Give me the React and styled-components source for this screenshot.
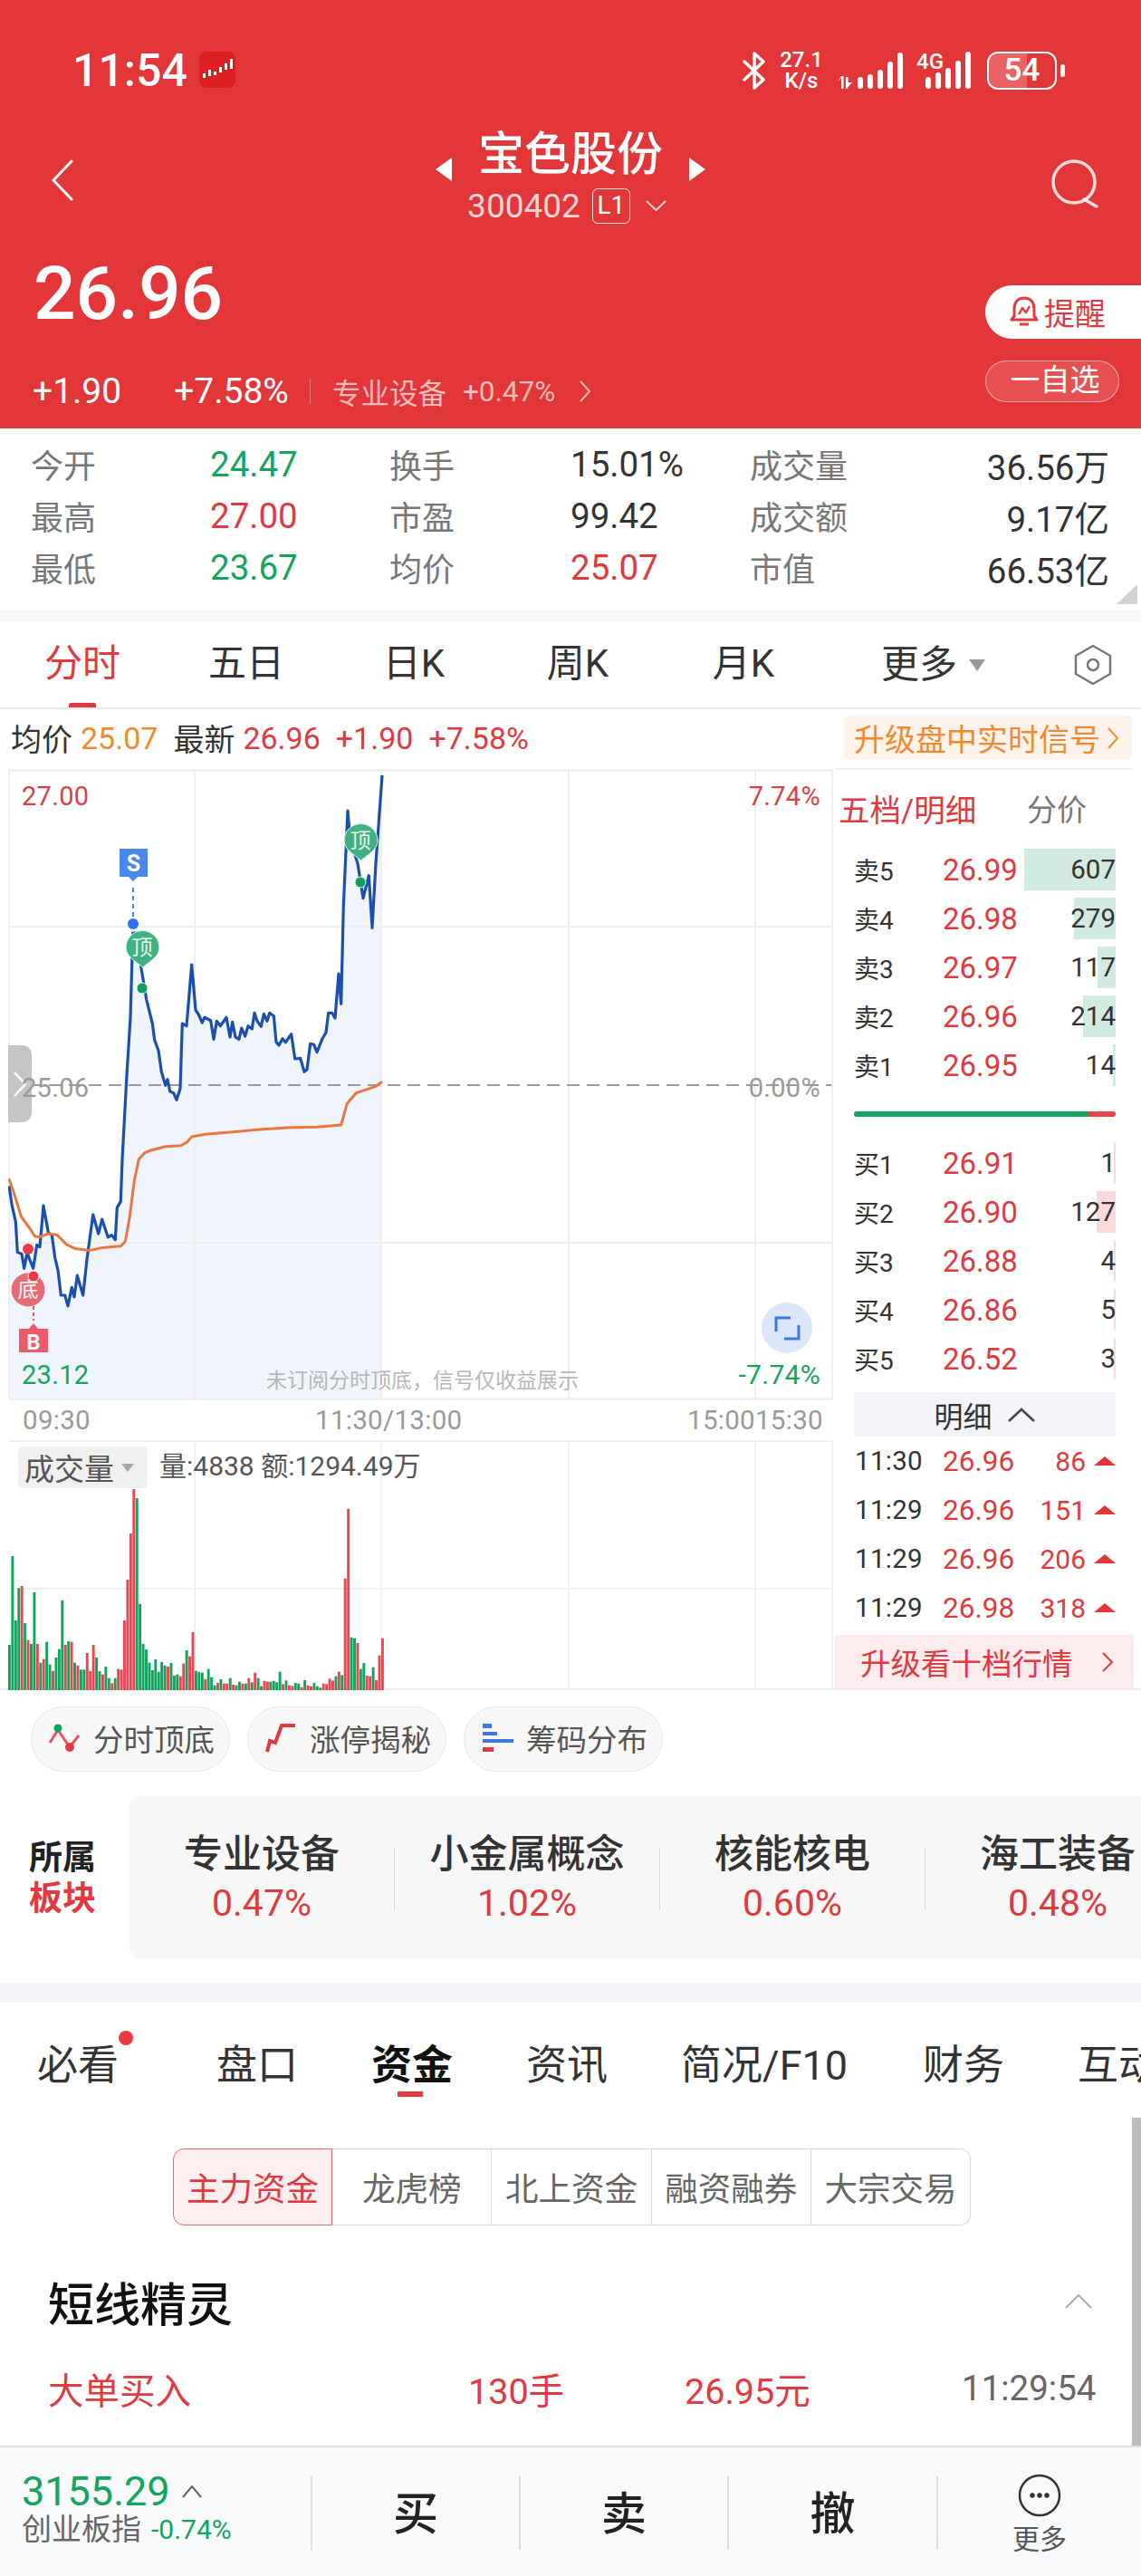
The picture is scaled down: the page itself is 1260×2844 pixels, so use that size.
import { Fragment } from 'react';
import styled, { createGlobalStyle } from 'styled-components';

const RED = '#e0393f';
const GREEN = '#11a561';

const GlobalStyle = createGlobalStyle`
  * { box-sizing: border-box; }
  html, body { margin: 0; padding: 0; background: #fff; }
  body { font-family: Roboto, "Noto Sans CJK SC", sans-serif; color: #333; }
`;

// chart points are read off the reference, page coordinates
const z3 = ([x, y]) => [x / 3, 840 + y / 3];
const z4 = ([x, y]) => [x / 3, 1260 + y / 2.53];

const priceLow = [[30,125],[40,180],[52,225],[58,310],[65,312],[72,315],[80,355],[90,310],[98,330],[110,355],[122,290],[132,295],[144,180],[160,255],[172,262],[182,325],[192,360],[202,430],[215,430],[225,460],[238,408],[246,435],[256,375],[275,430],[288,330],[308,205],[326,258],[338,218],[358,268],[370,262],[382,275],[388,185],[400,168]].map(z4);
const priceHigh = [[405,1320],[420,1040],[432,850],[440,570],[450,570],[470,700],[485,790],[505,870],[512,925],[525,960],[535,1030],[548,1075],[555,1055],[563,1095],[575,1100],[585,1123],[597,1085],[604,870],[618,878],[635,675],[648,825],[658,840],[670,867],[678,850],[698,860],[708,922],[718,862],[730,878],[750,850],[762,915],[770,865],[780,915],[792,922],[800,885],[812,912],[822,878],[835,888],[843,835],[852,862],[865,880],[874,838],[885,862],[893,835],[907,845],[915,932],[924,942],[936,920],[946,932],[965,905],[977,987],[995,985],[1008,1030],[1017,1022],[1028,937],[1040,940],[1050,965],[1068,920],[1080,900],[1088,835],[1100,835],[1110,852],[1122,705],[1130,805],[1138,480],[1152,165],[1160,260],[1185,340],[1203,455],[1222,380],[1233,553],[1245,340],[1266,48]].map(z3);
const avgLow = [[30,105],[50,155],[70,210],[100,245],[115,265],[130,268],[160,258],[190,262],[220,288],[250,300],[295,305],[340,297],[400,293],[415,280],[430,210],[445,110],[460,50]].map(z4);
const avgHigh = [[480,1298],[500,1290],[550,1277],[600,1274],[620,1262],[635,1245],[680,1237],[760,1230],[850,1222],[950,1215],[1050,1213],[1130,1206],[1150,1135],[1180,1100],[1210,1090],[1245,1078],[1266,1063]].map(z3);

const toPoints = (pts) => pts.map(([x, y]) => `${x.toFixed(1)},${y.toFixed(1)}`).join(' ');
const pricePts = [...priceLow, ...priceHigh];
const avgPts = [...avgLow, ...avgHigh];
const areaPts = [[10, 1544], ...pricePts, [421, 1544]];

// top of each volume bar, g = down minute, r = up minute
const volumes = 'g738 g444 g657 g550 r543 g666 r722 g735 g564 r735 g797 r785 g728 g803 r824 g780 g752 g590 r738 g726 r728 g797 r806 g820 g820 r765 r825 r738 g780 g825 r836 g810 g848 r865 g848 r818 r820 r657 r522 r369 r222 g252 g603 g735 g753 g797 g822 g786 g827 g795 g806 r810 g798 g840 g836 r842 r800 g756 r776 r696 g824 g827 g830 r851 g818 g845 g872 r864 g852 r866 r866 g848 r870 g872 g860 r866 g866 r848 g862 r830 g848 g875 r857 r860 g860 g857 g862 g827 r868 g856 r872 r874 g864 g866 r878 g855 r872 r875 g864 g875 g880 r866 r868 r850 r856 g842 r827 g838 r518 r288 g713 g716 r732 g818 g798 r840 r842 g812 r855 r773 r716'.split(' ');

const sellRows = [
  { label: '卖5', price: '26.99', qty: '607', bar: 101 },
  { label: '卖4', price: '26.98', qty: '279', bar: 46 },
  { label: '卖3', price: '26.97', qty: '117', bar: 20 },
  { label: '卖2', price: '26.96', qty: '214', bar: 36 },
  { label: '卖1', price: '26.95', qty: '14', bar: 3 },
];
const buyRows = [
  { label: '买1', price: '26.91', qty: '1', bar: 2 },
  { label: '买2', price: '26.90', qty: '127', bar: 21 },
  { label: '买3', price: '26.88', qty: '4', bar: 2 },
  { label: '买4', price: '26.86', qty: '5', bar: 2 },
  { label: '买5', price: '26.52', qty: '3', bar: 2 },
];
const trades = [
  ['11:30', '26.96', '86'],
  ['11:29', '26.96', '151'],
  ['11:29', '26.96', '206'],
  ['11:29', '26.98', '318'],
];
const concepts = [
  ['专业设备', '0.47%'],
  ['小金属概念', '1.02%'],
  ['核能核电', '0.60%'],
  ['海工装备', '0.48%'],
];

const Page = styled.div`
  width: 1260px;
  height: 2844px;
  overflow: hidden;
  display: flex;
  flex-direction: column;
  background: #fff;
`;

/* red header */
const Header = styled.header`
  height: 473px;
  flex-shrink: 0;
  background: #e33639;
  color: #fff;
  display: flex;
  flex-direction: column;
`;
const StatusBar = styled.div`
  height: 130px;
  padding: 57px 84px 0 80px;
  display: flex;
  align-items: flex-start;
`;
const Clock = styled.div`
  font-size: 50px;
  line-height: 42px;
  font-weight: 500;
`;
const AppBadge = styled.div`
  width: 40px;
  height: 40px;
  margin-left: 13px;
  border-radius: 8px;
  background: #dc1f21;
  display: flex;
`;
const StatusRight = styled.div`
  margin-left: auto;
  height: 42px;
  display: flex;
  align-items: center;
  svg { overflow: visible; }
`;
const Speed = styled.div`
  width: 50px;
  margin: 0 14px;
  text-align: center;
  font-size: 24px;
  line-height: 23px;
  font-weight: 500;
`;
const Battery = styled.div`
  position: relative;
  width: 77px;
  height: 42px;
  margin-left: 16px;
  border: 2.5px solid #fff;
  border-radius: 12px;
  overflow: hidden;
  text-align: center;
  font-size: 35px;
  line-height: 37px;
  font-weight: 500;
  span { position: relative; }
  &::before {
    content: '';
    position: absolute;
    left: 0;
    top: 0;
    bottom: 0;
    width: 58%;
    background: rgba(255, 255, 255, 0.22);
  }
`;
const BatteryNub = styled.div`
  width: 5px;
  height: 14px;
  margin-left: 4px;
  border-radius: 3px;
  background: #fff;
`;

const NavRow = styled.div`
  height: 125px;
  padding-top: 13px;
  position: relative;
  display: flex;
  flex-direction: column;
  align-items: center;
`;
const NavSide = styled.div`
  position: absolute;
  top: 46px;
  left: ${(p) => p.$left}px;
  display: flex;
`;
const TitleLine = styled.div`
  height: 56px;
  display: flex;
  align-items: center;
  gap: 29px;
`;
const Title = styled.div`
  font-size: 51px;
  line-height: 56px;
  font-weight: 500;
`;
const TitleArrow = styled.svg`
  margin-top: 32px;
`;
const CodeLine = styled.div`
  height: 56px;
  display: flex;
  align-items: center;
  font-size: 37px;
  color: #fbd5d5;
  padding-right: 8px;
`;
const LevelTag = styled.span`
  width: 42px;
  height: 39px;
  margin: 0 17px 0 13px;
  border: 1.5px solid #fde2e2;
  border-radius: 6px;
  color: #fff;
  font-size: 28px;
  line-height: 36px;
  text-align: center;
`;

const QuoteRow = styled.div`
  flex: 1;
  padding-left: 37px;
  display: flex;
  justify-content: space-between;
`;
const Price = styled.div`
  margin-top: 39px;
  height: 60px;
  font-size: 82px;
  line-height: 60px;
  font-weight: 500;
`;
const ChangeRow = styled.div`
  margin-top: 58px;
  margin-left: -1px;
  height: 40px;
  display: flex;
  align-items: center;
  font-size: 39px;
`;
const Change = styled.span`
  margin-right: 58px;
`;
const Divider = styled.i`
  width: 1px;
  height: 28px;
  margin: 0 24px 0 23px;
  background: rgba(255, 255, 255, 0.35);
`;
const SectorText = styled.span`
  font-size: 31.5px;
  color: #f9bcbc;
  margin-right: ${(p) => p.$gap || 0}px;
`;
const QuoteActions = styled.div`
  width: 172px;
  padding-top: 60px;
  display: flex;
  flex-direction: column;
  gap: 24px;
`;
const RemindButton = styled.div`
  height: 59px;
  padding-left: 27px;
  border-radius: 30px 0 0 30px;
  background: #fff;
  color: ${RED};
  font-size: 34px;
  display: flex;
  align-items: center;
  gap: 6px;
`;
const WatchButton = styled.div`
  width: 148px;
  height: 46px;
  padding-left: 6px;
  border: 1.5px solid rgba(255, 255, 255, 0.5);
  border-radius: 23px;
  background: rgba(255, 255, 255, 0.13);
  font-size: 33px;
  line-height: 42px;
  text-align: center;
`;

/* quote stats */
const Stats = styled.section`
  position: relative;
  height: 200px;
  padding: 11px 35px 0 34px;
  display: grid;
  grid-template-columns: 198px 198px 200px 198px auto 1fr;
  grid-auto-rows: 57px;
  align-items: center;
  flex-shrink: 0;
`;
const StatLabel = styled.div`
  margin-top: -2px;
  font-size: 36px;
  color: #777;
`;
const StatValue = styled.div`
  font-size: 38.5px;
  color: ${(p) => p.$color || '#333'};
  text-align: ${(p) => (p.$end ? 'right' : 'left')};
`;
const CornerMark = styled.div`
  position: absolute;
  right: 4px;
  bottom: 6px;
  width: 0;
  height: 0;
  border-left: 23px solid transparent;
  border-bottom: 22px solid #d2d2d2;
`;
const Gap = styled.div`
  height: ${(p) => p.$h}px;
  background: ${(p) => p.$bg};
  flex-shrink: 0;
`;

/* period tabs */
const PeriodTabs = styled.nav`
  height: 96px;
  border-bottom: 2px solid #e8e8e8;
  display: grid;
  grid-template-columns: 182px 180px 190px 172px 194px 185px 1fr;
  align-items: center;
  flex-shrink: 0;
`;
const PeriodTab = styled.div`
  position: relative;
  height: 94px;
  font-size: 42px;
  line-height: 92px;
  text-align: center;
  color: ${(p) => (p.$active ? RED : '#333')};
  ${(p) =>
    p.$active &&
    `&::after {
      content: '';
      position: absolute;
      left: 76px;
      bottom: 0;
      width: 30px;
      height: 5px;
      border-radius: 2px 2px 0 0;
      background: ${RED};
    }`}
`;
const MoreTab = styled(PeriodTab)`
  display: flex;
  align-items: center;
  padding-left: 55px;
  gap: 13px;
`;
const TabGear = styled.svg`
  margin-left: 83px;
`;

const InfoRow = styled.div`
  height: 66px;
  padding: 7px 10px 0 12px;
  display: flex;
  align-items: flex-start;
  flex-shrink: 0;
  font-size: 34px;
`;
const InfoPair = styled.div`
  height: 49px;
  margin-right: 17px;
  display: flex;
  align-items: center;
  gap: 9px;
  color: ${(p) => p.$color || '#333'};
`;
const InfoValue = styled.span`
  color: ${(p) => p.$color};
`;
const UpgradeTag = styled.div`
  margin-left: auto;
  width: 318px;
  height: 49px;
  padding-left: 11px;
  border-radius: 5px;
  background: #fdf3ea;
  color: #ee8b32;
  font-size: 34px;
  display: flex;
  align-items: center;
  gap: 7px;
`;

/* chart and order book */
const Market = styled.section`
  display: flex;
  height: 1017px;
  border-bottom: 2px solid #eee;
  flex-shrink: 0;
`;
const ChartColumn = styled.div`
  width: 921px;
  padding-left: 9px;
`;
const ChartCanvas = styled.div`
  position: relative;
  width: 912px;
  height: ${(p) => p.$h}px;
  svg { display: block; }
`;
const ChartLabel = styled.div`
  position: absolute;
  top: ${(p) => p.$top}px;
  ${(p) => (p.$right != null ? `right: ${p.$right}px;` : `left: ${p.$left}px;`)}
  font-size: ${(p) => p.$size || 29}px;
  line-height: 34px;
  letter-spacing: 0.3px;
  color: ${(p) => p.$color};
`;
const Watermark = styled.div`
  position: absolute;
  left: 285px;
  top: 661px;
  font-size: 23px;
  line-height: 30px;
  color: #b7b7b7;
`;
const CollapseTab = styled.div`
  position: absolute;
  left: 0;
  top: 305px;
  width: 26px;
  height: 85px;
  border-radius: 0 10px 10px 0;
  background: #c4c4c4;
  display: flex;
  align-items: center;
  svg { margin-left: 5px; }
`;
const TimeAxis = styled.div`
  height: 44px;
  padding-left: 16px;
  display: grid;
  grid-template-columns: 323px 411px auto;
  align-items: center;
  font-size: 29.5px;
  letter-spacing: 0.3px;
  color: #999;
`;
const VolumeTag = styled.div`
  position: absolute;
  left: 11px;
  top: 7px;
  width: 143px;
  height: 46px;
  padding-left: 7px;
  border-radius: 5px;
  background: #f0f0f0;
  font-size: 33px;
  color: #555;
  display: flex;
  align-items: center;
  gap: 8px;
`;
const VolumeInfo = styled.div`
  position: absolute;
  left: 167px;
  top: 9px;
  font-size: 30px;
  line-height: 40px;
  color: #555;
`;

const BookColumn = styled.div`
  width: 330px;
  margin-left: 1px;
  border-top: 2px solid #eee;
  margin-top: -1px;
  display: flex;
  flex-direction: column;
`;
const BookHead = styled.div`
  height: 84px;
  padding-left: 4px;
  display: flex;
  align-items: center;
  font-size: 33px;
  color: #777;
`;
const BookTitle = styled.span`
  width: 208px;
  font-size: 34.5px;
  color: ${RED};
`;
const BookBody = styled.div`
  padding: 0 20px 0 21px;
`;
const BookRow = styled.div`
  position: relative;
  height: 54px;
  display: flex;
  align-items: center;
`;
const DepthBar = styled.i`
  position: absolute;
  right: 0;
  top: 4px;
  bottom: 4px;
  background: ${(p) => (p.$sell ? '#d1ebe0' : '#fbd9db')};
`;
const BookLabel = styled.span`
  width: 98px;
  font-size: 28px;
  color: #333;
`;
const BookPrice = styled.span`
  font-size: 33px;
  color: ${RED};
`;
const BookQty = styled.span`
  position: relative;
  margin-left: auto;
  font-size: 29.5px;
  color: #333;
`;
const RatioBar = styled.div`
  height: 6px;
  margin: 24px 0;
  border-radius: 3px;
  background: linear-gradient(to right, ${GREEN} 0 259px, #e8434a 259px);
`;
const DetailHead = styled.div`
  height: 49px;
  margin-top: 10px;
  background: #f2f4f8;
  font-size: 32px;
  color: #333;
  display: flex;
  align-items: center;
  justify-content: center;
  gap: 16px;
`;
const TradeTime = styled.span`
  width: 98px;
  padding-left: 1px;
  font-size: 29.5px;
  letter-spacing: 0.3px;
`;
const TradePrice = styled.span`
  font-size: 31.5px;
  color: ${RED};
`;
const TradeQty = styled.span`
  margin-left: auto;
  margin-right: 9px;
  font-size: 30px;
  color: ${RED};
`;
const UpTriangle = styled.i`
  width: 0;
  height: 0;
  border-left: 12px solid transparent;
  border-right: 12px solid transparent;
  border-bottom: 10px solid #ea3338;
`;
const LevelUpgrade = styled.div`
  height: 59px;
  margin-top: 3px;
  padding: 0 22px 0 28px;
  background: #fdeced;
  color: ${RED};
  font-size: 33.5px;
  display: flex;
  align-items: center;
  justify-content: space-between;
`;

/* shortcuts */
const ChipRow = styled.div`
  height: 117px;
  padding: 18px 0 0 34px;
  display: flex;
  align-items: flex-start;
  gap: 19px;
  flex-shrink: 0;
`;
const Chip = styled.div`
  width: 220px;
  height: 72px;
  padding: 0 0 3px 18px;
  border: 1.5px solid #e6e6e6;
  border-radius: 36px;
  background: #f7f7f7;
  color: #555;
  font-size: 33.5px;
  display: flex;
  align-items: center;
  gap: 14px;
`;

const Sectors = styled.section`
  height: 180px;
  margin-bottom: 26px;
  display: flex;
  flex-shrink: 0;
`;
const SectorsLabel = styled.div`
  width: 143px;
  padding: 2px 0 0 32px;
  font-size: 37px;
  line-height: 45px;
  font-weight: 700;
  color: #222;
  display: flex;
  flex-direction: column;
  justify-content: center;
  b { font-weight: 700; color: ${RED}; }
`;
const SectorsPanel = styled.div`
  flex: 1;
  padding-top: 2px;
  overflow: hidden;
  border-radius: 12px 0 0 12px;
  background: #f7f7f8;
  display: flex;
  align-items: center;
`;
const SectorCell = styled.div`
  width: 292px;
  flex-shrink: 0;
  text-align: center;
  color: ${RED};
  font-size: 41px;
  line-height: 54px;
  strong { display: block; font-size: 43px; font-weight: 500; color: #333; }
`;
const SectorRule = styled.i`
  width: 1px;
  height: 69px;
  flex-shrink: 0;
  background: #d8d8d8;
`;

/* lower tabs */
const Lower = styled.section`
  position: relative;
  height: 489px;
  flex-shrink: 0;
`;
const ScrollThumb = styled.div`
  position: absolute;
  right: 0;
  top: 127px;
  width: 10px;
  height: 362px;
  background: #bcbcbc;
`;
const InfoTabs = styled.nav`
  height: 130px;
  padding-left: 41px;
  display: flex;
  align-items: center;
  gap: 81px;
  font-size: 45px;
  white-space: nowrap;
  color: #333;
`;
const InfoTab = styled.div`
  position: relative;
  flex-shrink: 0;
  margin-right: ${(p) => p.$extra || 0}px;
  font-weight: ${(p) => (p.$active ? 700 : 400)};
  color: ${(p) => (p.$active ? '#111' : '#333')};
  ${(p) =>
    p.$active &&
    `&::after {
      content: '';
      position: absolute;
      left: 29px;
      top: 65px;
      width: 28px;
      height: 6px;
      background: ${RED};
    }`}
`;
const RedDot = styled.i`
  position: absolute;
  right: -16px;
  top: -2px;
  width: 16px;
  height: 16px;
  border-radius: 50%;
  background: #ec3a40;
`;
const Segments = styled.div`
  width: 881px;
  height: 85px;
  margin: 31px 0 0 191px;
  display: grid;
  grid-template-columns: repeat(5, 1fr);
`;
const Segment = styled.div`
  border: 1px solid ${(p) => (p.$active ? '#e9656a' : '#d9d9d9')};
  border-left-width: ${(p) => (p.$active ? 1 : 0)}px;
  border-radius: ${(p) => (p.$active ? '12px 0 0 12px' : p.$last ? '0 12px 12px 0' : '0')};
  background: ${(p) => (p.$active ? '#fdeef0' : '#fff')};
  color: ${(p) => (p.$active ? RED : '#666')};
  font-size: 36.5px;
  white-space: nowrap;
  display: flex;
  align-items: center;
  justify-content: center;
`;
const SectionHead = styled.div`
  height: 60px;
  margin-top: 54px;
  padding: 0 54px 0 53px;
  display: flex;
  align-items: center;
  justify-content: space-between;
  font-size: 51px;
  font-weight: 500;
  color: #111;
`;
const SignalRow = styled.div`
  height: 129px;
  padding: 4px 0 3px 53px;
  display: grid;
  grid-template-columns: 464px 239px 306px auto;
  align-items: center;
  font-size: 39.5px;
  color: ${RED};
`;
const SignalTime = styled.span`
  font-size: 38.5px;
  color: #666;
`;

/* bottom bar */
const BottomBar = styled.footer`
  flex: 1;
  padding-top: 32px;
  border-top: 2px solid #dcdcdc;
  background: #f8f9fb;
  display: grid;
  grid-template-columns: 343px 230px 230px 231px 1fr;
  grid-template-rows: 81px;
`;
const IndexCell = styled.div`
  padding-left: 24px;
  color: ${GREEN};
`;
const IndexValue = styled.div`
  height: 33px;
  font-size: 45px;
  line-height: 33px;
  display: flex;
  align-items: center;
  gap: 13px;
`;
const IndexName = styled.div`
  height: 34px;
  margin-top: 9px;
  font-size: 30px;
  line-height: 34px;
  display: flex;
  align-items: center;
  gap: 11px;
  span { font-size: 33px; color: #666; }
`;
const ActionCell = styled.div`
  padding-bottom: 8px;
  border-left: 2px solid #ddd;
  font-size: 50px;
  font-weight: 500;
  color: #222;
  display: flex;
  align-items: center;
  justify-content: center;
`;
const MoreCell = styled.div`
  border-left: 2px solid #ddd;
  font-size: 30px;
  line-height: 44px;
  color: #555;
  display: flex;
  flex-direction: column;
  align-items: center;
  gap: 3px;
  svg { flex-shrink: 0; margin-top: -3px; }
`;

function StatusIcons() {
  return (
    <StatusRight>
      <svg width="26" height="42" viewBox="0 0 26 42" fill="none" stroke="#fff" strokeWidth="3.5" strokeLinecap="round" strokeLinejoin="round">
        <path d="M2 11 L23 31 L13 40 L13 2 L23 11 L2 31" />
      </svg>
      <Speed>27.1<br />K/s</Speed>
      <svg width="76" height="42" viewBox="0 0 76 42" fill="#fff">
        <path d="M1 33 L5 29 L5 41 L7.5 41 L7.5 27 L5 27 Z M10 28 L12.5 28 L12.5 34 L17 34 L11 41 L10 41 Z" />
        <rect x="23" y="28" width="6" height="13" rx="3" />
        <rect x="34" y="25" width="6" height="16" rx="3" />
        <rect x="45" y="20" width="6" height="21" rx="3" />
        <rect x="56" y="11" width="6" height="30" rx="3" />
        <rect x="67" y="1" width="6" height="40" rx="3" />
      </svg>
      <svg width="62" height="42" viewBox="0 0 62 42" fill="#fff" style={{ marginLeft: 12 }}>
        <text x="0" y="19" fontSize="24" fontWeight="500" fontFamily="Roboto">4G</text>
        <rect x="10" y="28" width="6" height="13" rx="3" />
        <rect x="21" y="23" width="6" height="18" rx="3" />
        <rect x="32" y="18" width="6" height="23" rx="3" />
        <rect x="43" y="10" width="6" height="31" rx="3" />
        <rect x="54" y="0" width="6" height="41" rx="3" />
      </svg>
      <Battery><span>54</span></Battery>
      <BatteryNub />
    </StatusRight>
  );
}

function ChartMarkers() {
  return (
    <g fontFamily="Roboto, 'Noto Sans CJK SC', sans-serif">
      {/* sell flag */}
      <path d="M132 937 H163 V968 H152 L147 973 L142 968 H132 Z" fill="#4a88ee" />
      <text x="147.5" y="962" textAnchor="middle" fontSize="25" fontWeight="700" fill="#fff">S</text>
      <line x1="147" y1="980" x2="147" y2="1014" stroke="#4a88ee" strokeWidth="2" strokeDasharray="5 4" />
      <circle cx="147" cy="1020" r="6" fill="#2f72f0" />

      {[[157, 1046, 1091], [398, 928, 974]].map(([x, y, dot]) => (
        <g key={x}>
          <path d={`M${x - 18} ${y} a18.5 18.5 0 1 1 37 0 c0 10 -10 15 -18.5 22 c-8 -7 -18.5 -12 -18.5 -22 z`} fill="#3fb281" stroke="#e8f7f0" strokeWidth="1" />
          <text x={x} y={y + 8} textAnchor="middle" fontSize="23" fill="#e9f8f1">顶</text>
          <circle cx={x} cy={dot} r="6" fill="#0fa15a" stroke="#e8f7f0" strokeWidth="1" />
        </g>
      ))}

      {/* buy flag */}
      <circle cx="31" cy="1379" r="6" fill="#ea3a47" />
      <circle cx="31" cy="1424" r="18.5" fill="#ea6a74" />
      <text x="31" y="1432" textAnchor="middle" fontSize="23" fill="#fff">底</text>
      <circle cx="37" cy="1409" r="6" fill="#ea3a47" stroke="#fff" strokeWidth="1" />
      <line x1="37" y1="1442" x2="37" y2="1458" stroke="#ea5562" strokeWidth="2" strokeDasharray="4 3" />
      <path d="M21 1467 H32 L37 1461 L42 1467 H53 V1493 H21 Z" fill="#ee5a68" />
      <text x="37" y="1490" textAnchor="middle" fontSize="24" fontWeight="700" fill="#fff">B</text>
    </g>
  );
}

function MainChart() {
  const grid = '#eeeeee';
  return (
    <ChartCanvas $h={697}>
      <svg width="912" height="697" viewBox="9 849 912 697">
        <polygon points={toPoints(areaPts)} fill="#eff4fd" />
        <g stroke={grid} strokeWidth="2">
          <line x1="10" y1="850" x2="919" y2="850" strokeWidth="3" />
          <line x1="10" y1="849" x2="10" y2="1545" />
          <line x1="215" y1="850" x2="215" y2="1545" />
          <line x1="421" y1="850" x2="421" y2="1545" />
          <line x1="628" y1="850" x2="628" y2="1545" />
          <line x1="834" y1="850" x2="834" y2="1545" />
          <line x1="919" y1="849" x2="919" y2="1545" />
          <line x1="10" y1="1023" x2="919" y2="1023" />
          <line x1="10" y1="1372" x2="919" y2="1372" />
          <line x1="10" y1="1545" x2="919" y2="1545" strokeWidth="3" />
        </g>
        <line x1="10" y1="1198" x2="918" y2="1198" stroke="#999" strokeWidth="2" strokeDasharray="14 8" />
        <polyline points={toPoints(pricePts)} fill="none" stroke="#1b4fae" strokeWidth="3.2" strokeLinejoin="round" />
        <polyline points={toPoints(avgPts)} fill="none" stroke="#e9773f" strokeWidth="3" strokeLinejoin="round" />
        <ChartMarkers />
        <circle cx="869" cy="1466" r="28" fill="#dce7fb" />
        <path d="M857 1470 V1455 H873 M866 1478 H882 V1463" fill="none" stroke="#3d78e4" strokeWidth="3" />
      </svg>
      <CollapseTab>
        <svg width="16" height="30" viewBox="0 0 16 30" fill="none" stroke="#fff" strokeWidth="2.5"><path d="M2 2 L14 15 L2 28" /></svg>
      </CollapseTab>
      <ChartLabel $left={15} $top={13} $color="#d93f46">27.00</ChartLabel>
      <ChartLabel $right={15} $top={13} $color="#d93f46">7.74%</ChartLabel>
      <ChartLabel $left={15} $top={335} $color="#999">25.06</ChartLabel>
      <ChartLabel $right={15} $top={335} $color="#999">0.00%</ChartLabel>
      <ChartLabel $left={15} $top={652} $color={GREEN}>23.12</ChartLabel>
      <ChartLabel $right={15} $top={652} $size={30} $color={GREEN}>-7.74%</ChartLabel>
      <Watermark>未订阅分时顶底，信号仅收益展示</Watermark>
    </ChartCanvas>
  );
}

function VolumeChart() {
  return (
    <ChartCanvas $h={276}>
      <svg width="912" height="276" viewBox="9 1590 912 276">
        <g stroke="#f0f0f0" strokeWidth="2">
          <line x1="10" y1="1591" x2="919" y2="1591" />
          <line x1="10" y1="1754" x2="919" y2="1754" />
          <line x1="215" y1="1591" x2="215" y2="1866" />
          <line x1="421" y1="1591" x2="421" y2="1866" />
          <line x1="628" y1="1591" x2="628" y2="1866" />
          <line x1="834" y1="1591" x2="834" y2="1866" />
          <line x1="919" y1="1591" x2="919" y2="1866" />
        </g>
        {volumes.map((v, i) => {
          const top = 1570 + Number(v.slice(1)) / 3;
          return <rect key={i} x={9 + i * 3.433} y={top} width="2.9" height={1866 - top} fill={v[0] === 'r' ? '#ec4451' : '#10a35c'} />;
        })}
      </svg>
      <VolumeTag>
        成交量
        <svg width="14" height="9" viewBox="0 0 14 9" fill="#aaa"><path d="M0 0 H14 L7 9 Z" /></svg>
      </VolumeTag>
      <VolumeInfo>量:4838 额:1294.49万</VolumeInfo>
    </ChartCanvas>
  );
}

function OrderBook() {
  return (
    <BookColumn>
      <BookHead>
        <BookTitle>五档/明细</BookTitle>
        分价
      </BookHead>
      <BookBody>
        {sellRows.map((r) => (
          <BookRow key={r.label}>
            <DepthBar $sell style={{ width: r.bar }} />
            <BookLabel>{r.label}</BookLabel>
            <BookPrice>{r.price}</BookPrice>
            <BookQty>{r.qty}</BookQty>
          </BookRow>
        ))}
        <RatioBar />
        {buyRows.map((r) => (
          <BookRow key={r.label}>
            <DepthBar style={{ width: r.bar }} />
            <BookLabel>{r.label}</BookLabel>
            <BookPrice>{r.price}</BookPrice>
            <BookQty>{r.qty}</BookQty>
          </BookRow>
        ))}
        <DetailHead>
          明细
          <svg width="32" height="18" viewBox="0 0 32 18" fill="none" stroke="#444" strokeWidth="2.5"><path d="M2 16 L16 3 L30 16" /></svg>
        </DetailHead>
        {trades.map(([time, price, qty], i) => (
          <BookRow key={i}>
            <TradeTime>{time}</TradeTime>
            <TradePrice>{price}</TradePrice>
            <TradeQty>{qty}</TradeQty>
            <UpTriangle />
          </BookRow>
        ))}
      </BookBody>
      <LevelUpgrade>
        升级看十档行情
        <svg width="14" height="24" viewBox="0 0 14 24" fill="none" stroke="#e0393f" strokeWidth="2"><path d="M2 2 L12 12 L2 22" /></svg>
      </LevelUpgrade>
    </BookColumn>
  );
}

export default function App() {
  return (
    <Page>
      <GlobalStyle />
      <Header>
        <StatusBar>
          <Clock>11:54</Clock>
          <AppBadge>
            <svg width="40" height="40" viewBox="0 0 40 40" fill="#fff">
              <rect x="4" y="24" width="3" height="5" />
              <rect x="10" y="20" width="3" height="7" />
              <rect x="16" y="22" width="3" height="4" />
              <rect x="22" y="17" width="3" height="6" />
              <rect x="28" y="13" width="3" height="7" />
              <rect x="34" y="8" width="3" height="11" />
            </svg>
          </AppBadge>
          <StatusIcons />
        </StatusBar>
        <NavRow>
          <NavSide $left={57}>
            <svg width="24" height="46" viewBox="0 0 24 46" fill="none" stroke="#fff" strokeWidth="3" strokeLinecap="round"><path d="M22 2 L2 23 L22 44" /></svg>
          </NavSide>
          <NavSide $left={1161}>
            <svg width="52" height="54" viewBox="0 0 52 54" fill="none" stroke="#fff" strokeOpacity="0.82" strokeWidth="3.5" strokeLinecap="round"><circle cx="25" cy="25" r="23" /><path d="M36 44 L50 52" /></svg>
          </NavSide>
          <TitleLine>
            <TitleArrow width="18" height="26" viewBox="0 0 18 26" fill="#fff"><path d="M18 0 V26 L0 13 Z" /></TitleArrow>
            <Title>宝色股份</Title>
            <TitleArrow width="18" height="26" viewBox="0 0 18 26" fill="#fff"><path d="M0 0 V26 L18 13 Z" /></TitleArrow>
          </TitleLine>
          <CodeLine>
            300402
            <LevelTag>L1</LevelTag>
            <svg width="23" height="12" viewBox="0 0 23 12" fill="none" stroke="#fbd5d5" strokeWidth="2"><path d="M1 1 L11.5 11 L22 1" /></svg>
          </CodeLine>
        </NavRow>
        <QuoteRow>
          <div>
            <Price>26.96</Price>
            <ChangeRow>
              <Change>+1.90</Change>
              +7.58%
              <Divider />
              <SectorText $gap={18}>专业设备</SectorText>
              <SectorText $gap={26}>+0.47%</SectorText>
              <svg width="14" height="26" viewBox="0 0 14 26" fill="none" stroke="#f9bcbc" strokeWidth="2"><path d="M2 2 L12 13 L2 24" /></svg>
            </ChangeRow>
          </div>
          <QuoteActions>
            <RemindButton>
              <svg width="32" height="38" viewBox="0 0 32 38" fill="none" stroke="#e0393f" strokeWidth="3" strokeLinejoin="round">
                <path d="M16 3 C8 3 5 9 5 15 V23 L2 27 H30 L27 23 V15 C27 9 24 3 16 3 Z" />
                <path d="M10 21 L14 14 L18 19 L22 12" strokeWidth="2.5" />
                <path d="M11 32 H21" />
              </svg>
              提醒
            </RemindButton>
            <WatchButton>一自选</WatchButton>
          </QuoteActions>
        </QuoteRow>
      </Header>

      <Stats>
        <StatLabel>今开</StatLabel><StatValue $color={GREEN}>24.47</StatValue>
        <StatLabel>换手</StatLabel><StatValue>15.01%</StatValue>
        <StatLabel>成交量</StatLabel><StatValue $end>36.56万</StatValue>
        <StatLabel>最高</StatLabel><StatValue $color={RED}>27.00</StatValue>
        <StatLabel>市盈</StatLabel><StatValue>99.42</StatValue>
        <StatLabel>成交额</StatLabel><StatValue $end>9.17亿</StatValue>
        <StatLabel>最低</StatLabel><StatValue $color={GREEN}>23.67</StatValue>
        <StatLabel>均价</StatLabel><StatValue $color={RED}>25.07</StatValue>
        <StatLabel>市值</StatLabel><StatValue $end>66.53亿</StatValue>
        <CornerMark />
      </Stats>
      <Gap $h={14} $bg="#f7f7f7" />

      <PeriodTabs>
        <PeriodTab $active>分时</PeriodTab>
        <PeriodTab>五日</PeriodTab>
        <PeriodTab>日K</PeriodTab>
        <PeriodTab>周K</PeriodTab>
        <PeriodTab>月K</PeriodTab>
        <MoreTab>
          更多
          <svg width="18" height="13" viewBox="0 0 18 13" fill="#999"><path d="M0 0 H18 L9 13 Z" /></svg>
        </MoreTab>
        <TabGear width="42" height="46" viewBox="0 0 42 46" fill="none" stroke="#777" strokeWidth="2.5" strokeLinejoin="round">
          <path d="M21 2 L40 13 V33 L21 44 L2 33 V13 Z" />
          <circle cx="21" cy="23" r="6" />
        </TabGear>
      </PeriodTabs>

      <InfoRow>
        <InfoPair>均价<InfoValue $color="#ee8b32">25.07</InfoValue></InfoPair>
        <InfoPair>最新<InfoValue $color={RED}>26.96</InfoValue></InfoPair>
        <InfoPair $color={RED}>+1.90</InfoPair>
        <InfoPair $color={RED}>+7.58%</InfoPair>
        <UpgradeTag>
          升级盘中实时信号
          <svg width="14" height="26" viewBox="0 0 14 26" fill="none" stroke="#ee8b32" strokeWidth="2"><path d="M2 2 L12 13 L2 24" /></svg>
        </UpgradeTag>
      </InfoRow>

      <Market>
        <ChartColumn>
          <MainChart />
          <TimeAxis>
            <span>09:30</span>
            <span>11:30/13:00</span>
            <span>15:0015:30</span>
          </TimeAxis>
          <VolumeChart />
        </ChartColumn>
        <OrderBook />
      </Market>

      <ChipRow>
        <Chip>
          <svg width="36" height="34" viewBox="0 0 36 34" fill="none" strokeWidth="3">
            <path d="M2 22 L11 8 L24 27 L34 14" stroke="#e9545c" />
            <circle cx="11" cy="6" r="4.5" fill="#13a463" stroke="none" />
            <circle cx="24" cy="27" r="5" fill="#e0393f" stroke="none" />
          </svg>
          分时顶底
        </Chip>
        <Chip>
          <svg width="36" height="34" viewBox="0 0 36 34" fill="none" stroke="#e0393f" strokeWidth="4">
            <path d="M3 32 L6 20 L12 22 L19 3 H34" />
          </svg>
          涨停揭秘
        </Chip>
        <Chip>
          <svg width="36" height="34" viewBox="0 0 36 34">
            <rect x="2" y="1" width="10" height="5" fill="#3b78e0" />
            <rect x="2" y="10" width="16" height="4" fill="#3b78e0" />
            <rect x="2" y="18" width="34" height="4" fill="#3b78e0" />
            <rect x="2" y="27" width="12" height="5" fill="#e0393f" />
          </svg>
          筹码分布
        </Chip>
      </ChipRow>

      <Sectors>
        <SectorsLabel>所属<b>板块</b></SectorsLabel>
        <SectorsPanel>
          {concepts.map(([name, pct], i) => (
            <Fragment key={name}>
              {i > 0 && <SectorRule />}
              <SectorCell>
                <strong>{name}</strong>
                {pct}
              </SectorCell>
            </Fragment>
          ))}
        </SectorsPanel>
      </Sectors>
      <Gap $h={22} $bg="#f3f4f8" />

      <Lower>
        <InfoTabs>
          <InfoTab $extra={27}>必看<RedDot /></InfoTab>
          <InfoTab>盘口</InfoTab>
          <InfoTab $active>资金</InfoTab>
          <InfoTab>资讯</InfoTab>
          <InfoTab $extra={2}>简况/F10</InfoTab>
          <InfoTab>财务</InfoTab>
          <InfoTab>互动</InfoTab>
        </InfoTabs>
        <Segments>
          <Segment $active>主力资金</Segment>
          <Segment>龙虎榜</Segment>
          <Segment>北上资金</Segment>
          <Segment>融资融券</Segment>
          <Segment $last>大宗交易</Segment>
        </Segments>
        <SectionHead>
          短线精灵
          <svg width="30" height="16" viewBox="0 0 30 16" fill="none" stroke="#aaa" strokeWidth="2"><path d="M1 15 L15 1 L29 15" /></svg>
        </SectionHead>
        <SignalRow>
          <span>大单买入</span>
          <span>130手</span>
          <span>26.95元</span>
          <SignalTime>11:29:54</SignalTime>
        </SignalRow>
        <ScrollThumb />
      </Lower>

      <BottomBar>
        <IndexCell>
          <IndexValue>
            3155.29
            <svg width="22" height="14" viewBox="0 0 22 14" fill="none" stroke="#666" strokeWidth="2"><path d="M1 13 L11 1 L21 13" /></svg>
          </IndexValue>
          <IndexName><span>创业板指</span>-0.74%</IndexName>
        </IndexCell>
        <ActionCell>买</ActionCell>
        <ActionCell>卖</ActionCell>
        <ActionCell>撤</ActionCell>
        <MoreCell>
          <svg width="48" height="48" viewBox="0 0 48 48" fill="none" stroke="#333" strokeWidth="2.5">
            <circle cx="24" cy="24" r="22" />
            <circle cx="16" cy="24" r="1.5" fill="#333" />
            <circle cx="24" cy="24" r="1.5" fill="#333" />
            <circle cx="32" cy="24" r="1.5" fill="#333" />
          </svg>
          更多
        </MoreCell>
      </BottomBar>
    </Page>
  );
}
